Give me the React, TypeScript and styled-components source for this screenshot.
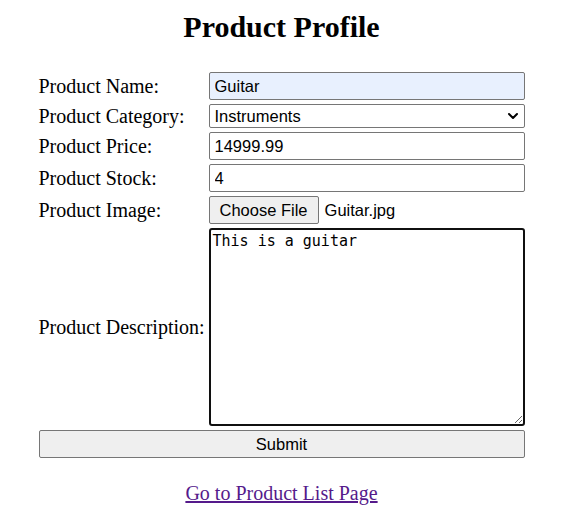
import styled, { createGlobalStyle } from 'styled-components';
import { ChevronDown } from 'lucide-react';

const GlobalStyle = createGlobalStyle`
  body {
    margin: 0;
    background: #ffffff;
    font-family: "Liberation Serif", "Times New Roman", serif;
    color: #000000;
  }
`;

const Page = styled.div`
  width: 563px;
  display: flex;
  flex-direction: column;
  align-items: center;
`;

const Title = styled.h1`
  margin: 9px 0 0;
  font-size: 30px;
  line-height: 36px;
  font-weight: bold;
`;

const Form = styled.form`
  margin-top: 27px;
  display: grid;
  grid-template-columns: 166px 316px;
  column-gap: 4px;
  row-gap: 4px;
  align-items: center;
`;

const Label = styled.label`
  font-size: 20px;
  line-height: 24px;
  white-space: nowrap;
`;

const TextInput = styled.input<{ $autofill?: boolean }>`
  box-sizing: border-box;
  width: 316px;
  height: 28px;
  margin: 0;
  padding: 0 5px;
  border: 1px solid #767676;
  border-radius: 2px;
  background: ${(p) => (p.$autofill ? '#e8f0fe' : '#ffffff')};
  font-family: "Liberation Sans", Arial, sans-serif;
  font-size: 16.5px;
  color: #000000;
  outline: none;
`;

const SelectWrap = styled.div`
  position: relative;
  width: 316px;
  height: 24px;
`;

const Select = styled.select`
  appearance: none;
  box-sizing: border-box;
  width: 100%;
  height: 24px;
  margin: 0;
  padding: 0 5px;
  border: 1px solid #767676;
  border-radius: 2px;
  background: #ffffff;
  font-family: "Liberation Sans", Arial, sans-serif;
  font-size: 16.5px;
  color: #000000;
`;

const Chevron = styled(ChevronDown)`
  position: absolute;
  right: 4px;
  top: 4px;
  pointer-events: none;
`;

const FileRow = styled.div`
  display: flex;
  align-items: center;
  gap: 6px;
  height: 28px;
`;

const Button = styled.button<{ $wide?: boolean }>`
  box-sizing: border-box;
  height: 28px;
  margin: 0;
  padding: 0 10px;
  width: ${(p) => (p.$wide ? '100%' : 'auto')};
  border: 1px solid #767676;
  border-radius: 2px;
  background: #efefef;
  font-family: "Liberation Sans", Arial, sans-serif;
  font-size: 16.5px;
  color: #000000;
`;

const FileName = styled.span`
  font-family: "Liberation Sans", Arial, sans-serif;
  font-size: 16.5px;
`;

const TextArea = styled.textarea`
  box-sizing: border-box;
  width: 316px;
  height: 198px;
  margin: 0;
  padding: 2px 2px;
  border: 2px solid #101010;
  border-radius: 3px;
  font-family: "DejaVu Sans Mono", monospace;
  font-size: 15px;
  line-height: 19px;
  color: #000000;
  outline: none;
`;

const SubmitCell = styled.div`
  grid-column: 1 / span 2;
`;

const ListLink = styled.a`
  margin-top: 23px;
  font-size: 20px;
  line-height: 24px;
  color: #551a8b;
  text-decoration: underline;
`;

function App() {
  return (
    <Page>
      <GlobalStyle />
      <Title>Product Profile</Title>
      <Form onSubmit={(e) => e.preventDefault()}>
        <Label>Product Name:</Label>
        <TextInput $autofill defaultValue="Guitar" />

        <Label>Product Category:</Label>
        <SelectWrap>
          <Select defaultValue="Instruments">
            <option>Instruments</option>
            <option>Electronics</option>
            <option>Books</option>
          </Select>
          <Chevron size={16} strokeWidth={3} color="#000" />
        </SelectWrap>

        <Label>Product Price:</Label>
        <TextInput defaultValue="14999.99" />

        <Label>Product Stock:</Label>
        <TextInput defaultValue="4" />

        <Label>Product Image:</Label>
        <FileRow>
          <Button type="button">Choose File</Button>
          <FileName>Guitar.jpg</FileName>
        </FileRow>

        <Label>Product Description:</Label>
        <TextArea defaultValue="This is a guitar" />

        <SubmitCell>
          <Button $wide type="submit">Submit</Button>
        </SubmitCell>
      </Form>
      <ListLink href="#">Go to Product List Page</ListLink>
    </Page>
  );
}

export default App;
